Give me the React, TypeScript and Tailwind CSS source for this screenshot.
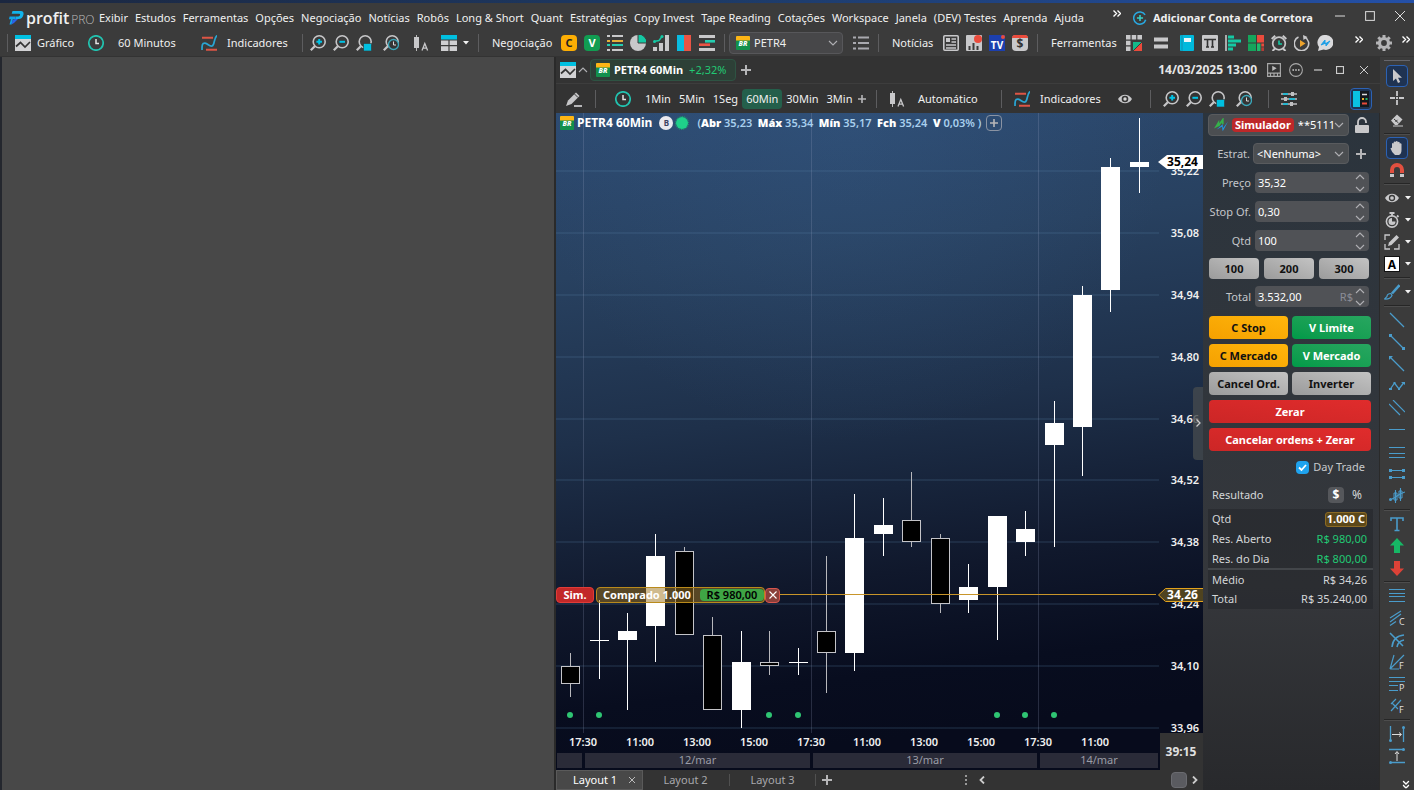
import React, { ReactNode } from "react";

const FONT = "font-['Noto_Sans','Open_Sans',sans-serif]";

/* ---------- shared pieces ---------- */

function Icon({ children, className = "size-4" }: { children: ReactNode; className?: string }) {
  return (
    <svg viewBox="0 0 16 16" className={`shrink-0 ${className}`} fill="none" aria-hidden="true">
      {children}
    </svg>
  );
}

function IconButton({ label, children, className = "" }: { label: string; children: ReactNode; className?: string }) {
  return (
    <button type="button" aria-label={label} className={`flex shrink-0 items-center justify-center ${className}`}>
      {children}
    </button>
  );
}

function Divider({ className = "" }: { className?: string }) {
  return <div className={`h-[18px] w-px shrink-0 bg-[#5d5d5f] ${className}`} />;
}

const GraphIcon = () => (
  <Icon>
    <rect width="16" height="16" fill="#d2d2d4" />
    <rect width="16" height="4" fill="#00bfe0" />
    <path d="M1 11.500l4.500-4L10 12l5-5" stroke="#333" strokeWidth="1.700" />
  </Icon>
);

const ClockIcon = () => (
  <Icon>
    <circle cx="8" cy="8" r="7.200" stroke="#22c3b0" strokeWidth="1.700" />
    <path d="M8 4v4.500h3" stroke="#e4e4e4" strokeWidth="1.500" />
  </Icon>
);

const IndicatorIcon = () => (
  <Icon>
    <path d="M1 2.800h11M5 14.800h11" stroke="#dd5545" strokeWidth="2" />
    <path d="M1 15c0-5 0-7 3-6.800C7 8.500 8 11.500 11 11c3-.8 1.500-8 5-10.500" stroke="#29a6d4" strokeWidth="1.700" />
  </Icon>
);

const Lens = () => (
  <>
    <circle cx="9.200" cy="6.800" r="6" stroke="#c6c6c8" strokeWidth="1.600" />
    <path d="M4.800 11.200L.8 15.200" stroke="#c6c6c8" strokeWidth="2.200" />
  </>
);

const ZoomIcons = () => (
  <>
    <IconButton label="Mais zoom">
      <Icon>
        <Lens />
        <path d="M9.200 4v5.600M6.400 6.800H12" stroke="#00c3e6" strokeWidth="2" />
      </Icon>
    </IconButton>
    <IconButton label="Menos zoom">
      <Icon>
        <Lens />
        <path d="M6.400 6.800H12" stroke="#00c3e6" strokeWidth="2" />
      </Icon>
    </IconButton>
    <IconButton label="Zoom na seleção">
      <Icon>
        <Lens />
        <rect x="7.500" y="8.500" width="8" height="7.500" fill="#00bfe0" stroke="#333" strokeWidth=".6" />
      </Icon>
    </IconButton>
    <IconButton label="Zoom no período" className="ml-1">
      <Icon>
        <Lens />
        <circle cx="10.500" cy="9.500" r="5" fill="#353535" stroke="#3aa8bb" strokeWidth="1.300" />
        <path d="M10.500 6.500v3.500H13" stroke="#ddd" />
      </Icon>
    </IconButton>
  </>
);

const CandleAIcon = () => (
  <Icon>
    <path d="M3.500 0v16" stroke="#bbb" />
    <rect x="1" y="2" width="5" height="11" fill="#c8c8ca" />
    <path d="M9 15.500l2.800-7 2.800 7M10 13.200h3.600" stroke="#c8c8ca" strokeWidth="1.300" />
  </Icon>
);

const Caret = () => (
  <svg viewBox="0 0 6 4" className="h-1 w-1.5 shrink-0" aria-hidden="true">
    <path d="M0 0h6L3 3.500z" fill="#f2f2f2" />
  </svg>
);

const Chevron = ({ up = false }: { up?: boolean }) => (
  <svg viewBox="0 0 10 6" className="h-1.5 w-2.5 shrink-0" fill="none" aria-hidden="true">
    <path d={up ? "M1 5l4-4 4 4" : "M1 1l4 4 4-4"} stroke="#b0b0b4" strokeWidth="1.100" />
  </svg>
);

const DoubleChevron = ({ className = "" }: { className?: string }) => (
  <svg viewBox="0 0 8 7" className={`h-[7px] w-2 shrink-0 ${className}`} fill="none" aria-hidden="true">
    <path d="M.5.5l3 3-3 3M4.500.5l3 3-3 3" stroke="#fff" strokeWidth="1.400" />
  </svg>
);

const PetroIcon = () => (
  <svg viewBox="0 0 14 14" className="size-3.5 shrink-0" aria-hidden="true">
    <rect width="14" height="14" rx="1" fill="#12904c" />
    <path d="M0 4.500V1q0-1 1-1h12q1 0 1 1v3.500z" fill="#fdb515" />
    <text x="7" y="10" textAnchor="middle" fontSize="7" fontWeight="800" fontStyle="italic" fill="#fff" className={FONT}>
      BR
    </text>
  </svg>
);

const EyeIcon = () => (
  <Icon>
    <path d="M1 8c3.500-5.800 10.500-5.800 14 0-3.500 5.800-10.500 5.800-14 0z" fill="#c9c9cb" />
    <circle cx="8" cy="8" r="3.300" fill="#353535" />
    <circle cx="8" cy="8" r="1.700" fill="#d5d5d5" />
  </Icon>
);

const PlusIcon = ({ className = "size-2.5" }: { className?: string }) => (
  <svg viewBox="0 0 10 10" className={`shrink-0 ${className}`} aria-hidden="true">
    <path d="M5 0v10M0 5h10" stroke="#b6b6b8" strokeWidth="2" />
  </svg>
);

/* ---------- application header ---------- */

const MENU = [
  "Exibir", "Estudos", "Ferramentas", "Opções", "Negociação", "Notícias", "Robôs", "Long & Short", "Quant",
  "Estratégias", "Copy Invest", "Tape Reading", "Cotações", "Workspace", "Janela", "(DEV) Testes", "Aprenda", "Ajuda",
];

function MenuBar() {
  return (
    <header className="flex h-[27px] items-center pl-[9px] pr-2 pt-[3px] text-[#f0f0f0]">
      <div className="flex w-[90px] shrink-0 items-center gap-0.5">
        <svg viewBox="0 0 15 14" className="h-3.5 w-[15px]" aria-hidden="true">
          <path d="M3.500 0H12q3 0 2.500 3.500Q13.500 8 9.500 8H6.200l.7-2.600h2.400q1.500 0 1.800-1.400.2-1.200-1-1.200H2.700z" fill="#12b4ec" />
          <path d="M.6 5.500h6.200l-.7 2.700H3.800L2.500 13.500H.5L2 8.200H0z" fill="#12a4ea" />
          <path d="M6.200 8H9L5 12l-2.500 1.500L3.500 9z" fill="#2a63e8" />
        </svg>
        <span className="flex items-baseline font-['Open_Sans',sans-serif] leading-4">
          <span className="text-base font-semibold">profit</span>
          <span className="ml-0.5 text-[12px] font-light text-[#b9b9b9]">PRO</span>
        </span>
      </div>
      <nav className="flex w-[985px] items-center justify-between whitespace-nowrap">
        {MENU.map((m) => (
          <a key={m} href="#">{m}</a>
        ))}
      </nav>
      <DoubleChevron className="mb-2.5 ml-[29px]" />
      <button type="button" className="ml-3 flex flex-1 items-center gap-1.5 whitespace-nowrap font-bold">
        <Icon className="size-3.5">
          <path d="M13.800 4.500A7 7 0 1 0 14.500 10" stroke="#29a8e0" strokeWidth="1.800" />
          <path d="M8 4.500v7M4.500 8h7" stroke="#35d0c8" strokeWidth="1.800" />
        </Icon>
        Adicionar Conta de Corretora
      </button>
      <div className="flex items-center gap-5 pb-1 pr-px">
        <IconButton label="Minimizar"><Icon className="size-2.5"><path d="M0 8h16" stroke="#ddd" strokeWidth="1.600" /></Icon></IconButton>
        <IconButton label="Maximizar"><Icon className="size-2.5"><rect x="1" y="1" width="14" height="14" stroke="#ddd" strokeWidth="1.600" /></Icon></IconButton>
        <IconButton label="Fechar"><Icon className="size-2.5"><path d="M0 0l16 16M16 0L0 16" stroke="#ddd" strokeWidth="1.600" /></Icon></IconButton>
      </div>
    </header>
  );
}

const Letter = ({ bg, fg, ch }: { bg: string; fg: string; ch: string }) => (
  <span className={`flex size-4 items-center justify-center rounded-sm text-[11px] font-bold ${bg} ${fg}`}>{ch}</span>
);

function MainToolbar() {
  return (
    <div className="flex h-[26px] items-center whitespace-nowrap pl-[7px] pr-1 text-[#f0f0f0]">
      <Divider />
      <button type="button" className="ml-[7px] flex w-[73px] shrink-0 items-center gap-1.5"><GraphIcon />Gráfico</button>
      <button type="button" className="flex w-[113px] shrink-0 items-center gap-3.5"><ClockIcon />60 Minutos</button>
      <button type="button" className="flex w-[101px] shrink-0 items-center gap-2.5"><IndicatorIcon />Indicadores</button>
      <Divider />
      <div className="ml-[7px] flex shrink-0 items-center gap-[7px]"><ZoomIcons /></div>
      <IconButton label="Tipo de gráfico" className="ml-3.5"><CandleAIcon /></IconButton>
      <button type="button" aria-label="Layouts" className="ml-3 flex shrink-0 items-center gap-1.5">
        <Icon>
          <rect width="16" height="4.500" fill="#00bfe0" />
          <path d="M0 5.500h7.400v4.600H0zM8.600 5.500H16v4.600H8.600zM0 11.300h7.400V16H0zM8.600 11.300H16V16H8.600z" fill="#cfcfd1" />
        </Icon>
        <Caret />
      </button>
      <Divider className="ml-[9px]" />
      <span className="ml-[13px] w-[69px] shrink-0">Negociação</span>
      <div className="flex shrink-0 items-center gap-[7px]">
        <IconButton label="Compra"><Letter bg="bg-[#fdae04]" fg="text-[#222]" ch="C" /></IconButton>
        <IconButton label="Venda"><Letter bg="bg-[#119d52]" fg="text-white" ch="V" /></IconButton>
        <IconButton label="Ordens">
          <Icon>
            <path d="M0 1h3M5 1h11M0 15h3M5 15h11" stroke="#c8c8ca" strokeWidth="2" />
            <path d="M0 6h3M5 6h11" stroke="#e5b03a" strokeWidth="2" />
            <path d="M0 10h3M5 10h11" stroke="#25cdb0" strokeWidth="2" />
          </Icon>
        </IconButton>
        <IconButton label="Carteira">
          <Icon>
            <circle cx="8" cy="8" r="8" fill="#c8c8ca" />
            <path d="M8-1a9 9 0 0 1 9 9H8z" fill="#14c9a4" stroke="#3b3b3b" />
          </Icon>
        </IconButton>
        <IconButton label="Performance">
          <Icon>
            <path d="M0 12h4v4H0zM6 8h4v8H6zM12 0h4v16h-4z" fill="#c8c8ca" />
            <path d="M1 6.500l5-1 3-4" stroke="#14c9a4" strokeWidth="1.400" />
            <circle cx="1.500" cy="6.500" r="1.500" fill="#14c9a4" /><circle cx="9" cy="1.500" r="1.500" fill="#14c9a4" />
          </Icon>
        </IconButton>
        <IconButton label="Book"><Icon><path d="M1 0h7v16H1z" fill="#0abbe0" /><path d="M8 0h7v16H8z" fill="#ea5445" /></Icon></IconButton>
        <IconButton label="Profundidade">
          <Icon>
            <path d="M0 1.500h16M0 14.500h16" stroke="#c8c8ca" strokeWidth="3" />
            <path d="M6 6.300h10" stroke="#25cdb0" strokeWidth="2.600" /><path d="M0 9.700h11" stroke="#ea5445" strokeWidth="2.600" />
          </Icon>
        </IconButton>
      </div>
      <Divider className="ml-[9px]" />
      <div className="relative ml-1 flex h-[22px] w-[114px] shrink-0 items-center rounded-sm border border-[#57575a] bg-[#474749] pl-1.5">
        <PetroIcon />
        <select aria-label="Ativo" className="h-full min-w-0 flex-1 appearance-none bg-transparent pl-1 text-[11px] outline-none"><option>PETR4</option></select>
        <span className="pointer-events-none pr-1"><Chevron /></span>
      </div>
      <IconButton label="Lista" className="ml-2.5">
        <Icon><path d="M0 2.500h3M5 2.500h11M0 8h3M5 8h11M0 13.500h3M5 13.500h11" stroke="#a9a9af" strokeWidth="1.800" /></Icon>
      </IconButton>
      <Divider className="ml-[9px]" />
      <span className="ml-[13px] w-[51px] shrink-0">Notícias</span>
      <div className="flex shrink-0 items-center gap-[7px]">
        <IconButton label="Jornal">
          <Icon><rect x=".8" y=".8" width="14.400" height="14.400" rx="1" stroke="#c8c8ca" strokeWidth="1.600" /><path d="M3 3h4v4H3z" fill="#c8c8ca" /><path d="M8.500 4H13M8.500 7H13M3 10h10M3 13h10" stroke="#c8c8ca" strokeWidth="1.500" /></Icon>
        </IconButton>
        <IconButton label="Calendário">
          <Icon><rect width="16" height="16" rx="1" fill="#c8c8ca" /><path d="M3.500 15v-4M7.500 15V8M11.500 15v-4" stroke="#3b3b3b" strokeWidth="2" /><circle cx="12" cy="4" r="4" fill="#ea4b3c" /></Icon>
        </IconButton>
        <IconButton label="TV" className="relative">
          <span className="flex size-4 items-end justify-center bg-[#1c3fae] text-[10px] font-bold leading-3 text-white">TV</span>
          <span className="absolute right-0 top-0 size-1 rounded-full bg-[#ea4b3c]" />
        </IconButton>
        <IconButton label="Proventos">
          <span className="flex size-4 flex-col rounded-sm bg-[#c8c8ca] text-[#333]"><span className="h-[3px] shrink-0 rounded-t-sm bg-[#ea4b3c]" /><span className="text-center text-[12px] font-bold leading-3">$</span></span>
        </IconButton>
      </div>
      <Divider className="ml-[9px]" />
      <span className="ml-[13px] w-[75px] shrink-0">Ferramentas</span>
      <div className="flex shrink-0 items-center gap-[7px]">
        <IconButton label="Grade">
          <Icon><path d="M0 0h4.500v4.500H0zM5.700 0h4.500v4.500H5.700zM11.400 0H16v4.500h-4.600zM0 5.700h4.500v4.500H0zM0 11.400h4.500V16H0z" fill="#c8c8ca" /><path d="M16 7v9H7z" fill="#ea4b3c" /><path d="M7 7h9l-9 9z" fill="#14b98a" /><path d="M16 7l-9 9" stroke="#3b3b3b" /></Icon>
        </IconButton>
        <IconButton label="Linhas" className="ml-1"><Icon><path d="M1 4.500h14M1 11.500h14" stroke="#c8c8ca" strokeWidth="4" /></Icon></IconButton>
        <IconButton label="Diário" className="ml-[3px]"><Icon><rect x="1" width="14" height="16" rx="1" fill="#00b9dc" /><path d="M3 0v16" stroke="#0d8fb0" /><rect x="5" y="3" width="7" height="4" fill="#e8f6fa" /></Icon></IconButton>
        <IconButton label="Texto"><Icon><rect width="16" height="16" rx="1" fill="#c8c8ca" /><path d="M2 4.500h12M5.500 4v8M10.500 4v8M4 12h3M9 12h3" stroke="#333" strokeWidth="1.600" /></Icon></IconButton>
        <IconButton label="Volume"><Icon><path d="M1 0v16" stroke="#c8c8ca" strokeWidth="1.600" /><path d="M3 2h6M3 6h13M3 10h8M3 14h5" stroke="#14c9a4" strokeWidth="3" /></Icon></IconButton>
        <IconButton label="Mapa de calor"><Icon><path d="M0 0h8v7.500H0zM0 8.500h8V16H0z" fill="#15a55c" /><path d="M9 0h7v7.500H9z" fill="#ea4b3c" /><path d="M9 8.500h3.500V16H9z" fill="#1fba6b" /><path d="M13.300 8.500H16v3h-2.700z" fill="#ea4b3c" /><path d="M13.300 12.300H16V16h-2.700z" fill="#b33c36" /></Icon></IconButton>
        <IconButton label="Alarme"><Icon><circle cx="8" cy="8.500" r="6.300" stroke="#c8c8ca" strokeWidth="1.700" /><path d="M.7 4l3.500-3.300M15.300 4l-3.500-3.300M4 13.500L1.500 16M12 13.500l2.500 2.500" stroke="#c8c8ca" strokeWidth="2" /><path d="M8 5.500V9h3" stroke="#14c9a4" strokeWidth="1.600" /></Icon></IconButton>
        <IconButton label="Replay"><Icon><path d="M4.500 2a7.200 7.200 0 1 0 6 0" stroke="#c8c8ca" strokeWidth="1.600" /><path d="M9 0l4.500 2L9.500 5z" fill="#c8c8ca" /><path d="M6 5l5.500 3.500L6 12z" fill="#eda32c" /></Icon></IconButton>
        <IconButton label="Chat"><Icon><path d="M8.500 0a7.500 7.500 0 1 1-2 14.600L1 16l1-4A7.500 7.500 0 0 1 8.500 0z" fill="#dadadc" /><path d="M4 10l4-5v4l5-3-4 5V8z" fill="#1d9fe6" stroke="#1d9fe6" /></Icon></IconButton>
      </div>
      <DoubleChevron className="mb-2 ml-[22px]" />
      <IconButton label="Configurações" className="ml-[13px]">
        <Icon><circle cx="8" cy="8" r="4.500" stroke="#b4b4b6" strokeWidth="3.200" /><path d="M8 0v3M8 13v3M0 8h3M13 8h3M2.300 2.300l2 2M11.700 11.700l2 2M2.300 13.700l2-2M11.700 4.300l2-2" stroke="#b4b4b6" strokeWidth="3" /></Icon>
      </IconButton>
      <DoubleChevron className="mb-2 ml-2.5" />
    </div>
  );
}

/* ---------- chart window ---------- */

function ChartTitle() {
  return (
    <div className="flex h-[27px] shrink-0 items-center border-b border-[#3d3d3d] pl-1 pr-3">
      <button type="button" aria-label="Gráfico" className="flex items-center gap-0.5"><GraphIcon /><Chevron up /></button>
      <button type="button" className="ml-0.5 flex h-[22px] w-[146px] items-center gap-1 rounded border border-[#2e5343] bg-[#2d4037] pl-[5px]">
        <PetroIcon />
        <span className="font-bold text-white">PETR4 60Min</span>
        <span className="ml-0.5 text-[#22c974]">+2,32%</span>
      </button>
      <IconButton label="Nova aba" className="ml-[5px]"><PlusIcon /></IconButton>
      <span className="ml-auto text-[12px] font-bold text-[#e6e6e6]">14/03/2025 13:00</span>
      <div className="ml-2.5 flex items-center">
        <IconButton label="Replay"><Icon className="size-3.5"><path d="M.7.7h14.600v14.600H.7zM0 11.500h16M4 12v3.500M8 12v3.500M12 12v3.500" stroke="#aaa" strokeWidth="1.300" /><path d="M6 3l5 3-5 3z" fill="#bbb" /></Icon></IconButton>
        <IconButton label="Mais" className="ml-2"><Icon className="size-3.5"><circle cx="8" cy="8" r="7.300" stroke="#aaa" strokeWidth="1.200" /><path d="M4 8h1.600M7.200 8h1.600M10.400 8H12" stroke="#ddd" strokeWidth="1.600" /></Icon></IconButton>
        <IconButton label="Minimizar" className="ml-[11px]"><Icon className="size-2"><path d="M0 8h16" stroke="#ccc" strokeWidth="2.400" /></Icon></IconButton>
        <IconButton label="Maximizar" className="ml-3.5"><Icon className="size-2"><rect x="1" y="1" width="14" height="14" stroke="#ccc" strokeWidth="2.400" /></Icon></IconButton>
        <IconButton label="Fechar" className="ml-4"><Icon className="size-2"><path d="M0 0l16 16M16 0L0 16" stroke="#ccc" strokeWidth="2" /></Icon></IconButton>
      </div>
    </div>
  );
}

const PERIODS = ["1Min", "5Min", "1Seg", "60Min", "30Min", "3Min"];

function ChartToolbar() {
  return (
    <div className="flex h-[29px] shrink-0 items-center whitespace-nowrap pl-2.5 pr-2 text-[#f0f0f0]">
      <IconButton label="Desenhar">
        <Icon><path d="M0 15l2-5.500 8-8 3.500 3.500-8 8z" fill="#c6c6c8" /><path d="M8.500 3l3.500 3.500" stroke="#353535" /><path d="M8 15h8" stroke="#c6c6c8" strokeWidth="1.800" /></Icon>
      </IconButton>
      <Divider className="ml-[13px]" />
      <IconButton label="Periodicidade" className="ml-[19px]"><ClockIcon /></IconButton>
      <div className="ml-2.5 flex w-[209px] shrink-0 items-center justify-between">
        {PERIODS.map((p) => (
          <button key={p} type="button" className={`flex h-5 items-center rounded px-1 ${p === "60Min" ? "bg-[#245f4b]" : ""}`}>{p}</button>
        ))}
      </div>
      <IconButton label="Adicionar período" className="ml-2"><PlusIcon className="size-2" /></IconButton>
      <Divider className="ml-2.5" />
      <button type="button" className="ml-3 flex w-[99px] shrink-0 items-center gap-[13px]"><CandleAIcon />Automático</button>
      <Divider className="ml-[13px]" />
      <button type="button" className="ml-3 flex w-[103px] shrink-0 items-center gap-2.5"><IndicatorIcon />Indicadores</button>
      <IconButton label="Visibilidade"><EyeIcon /></IconButton>
      <Divider className="ml-[17px]" />
      <div className="ml-3 flex items-center gap-[7px]"><ZoomIcons /></div>
      <Divider className="ml-4" />
      <IconButton label="Propriedades" className="ml-3">
        <Icon><path d="M0 3h16M0 8h16M0 13h16" stroke="#c0c0c2" strokeWidth="1.600" /><path d="M10 1h3v4h-3zM3 6h3v4H3zM9 11h3v4H9z" fill="#c0c0c2" /><path d="M2 3h5M8 8h6M2 13h5" stroke="#00bfe0" strokeWidth="1.700" /></Icon>
      </IconButton>
      <IconButton label="Boleta" className="ml-auto size-[22px] rounded border border-[#2c62b4] bg-[#1f3352]">
        <Icon><path d="M0 0h7v16H0z" fill="#0ac0e4" /><path d="M7 0h9v16H7z" fill="#15181d" /><path d="M9 3.500h5" stroke="#ddd" strokeWidth="1.500" /><path d="M9 8h2" stroke="#edae2c" strokeWidth="2" /><path d="M12.500 8h2" stroke="#21b868" strokeWidth="2" /><path d="M9 12.500h5" stroke="#ea4b3c" strokeWidth="2" /></Icon>
      </IconButton>
    </div>
  );
}

/* centre x, high, low, body top, body bottom, falling */
const CANDLES: [number, number, number, number, number, boolean][] = [
  [570, 653, 697, 666, 684, true], [599, 600, 679, 640, 641, false], [627, 613, 710, 631, 640, false],
  [655, 534, 662, 556, 626, false], [684, 547, 635, 551, 635, true], [712, 617, 710, 635, 710, true],
  [741, 631, 728, 662, 710, false], [769, 631, 675, 662, 666, true], [798, 648, 675, 662, 663, false],
  [826, 556, 693, 631, 653, true], [854, 494, 671, 538, 653, false], [883, 498, 556, 525, 534, false],
  [911, 472, 547, 520, 542, true], [940, 534, 613, 538, 604, true], [968, 564, 613, 587, 600, false],
  [997, 516, 640, 516, 587, false], [1025, 511, 556, 529, 542, false], [1054, 401, 547, 423, 445, false],
  [1082, 286, 476, 295, 427, false], [1110, 158, 312, 167, 290, false], [1139, 118, 193, 162, 167, false],
];
const PRICES: [string, number][] = [
  ["35,22", 171], ["35,08", 233], ["34,94", 295], ["34,80", 357], ["34,66", 419],
  ["34,52", 480], ["34,38", 542], ["34,24", 604], ["34,10", 666], ["33,96", 728],
];
const TIMES: [string, number][] = [
  ["17:30", 583], ["11:00", 640], ["13:00", 697], ["15:00", 754], ["17:30", 811],
  ["11:00", 867], ["13:00", 924], ["15:00", 981], ["17:30", 1038], ["11:00", 1095],
];
const DAYS: [string, number, number][] = [["", 557, 582], ["12/mar", 585, 810], ["13/mar", 813, 1037], ["14/mar", 1040, 1158]];

function CandleChart() {
  return (
    <svg viewBox="556 113 647 657" preserveAspectRatio="none" className={`block size-full ${FONT}`} role="img" aria-label="PETR4 60Min">
      <defs>
        <linearGradient id="sky" x1="0" y1="0" x2=".12" y2="1">
          <stop offset="0" stopColor="#2d4b72" />
          <stop offset=".25" stopColor="#284160" />
          <stop offset=".5" stopColor="#1e304a" />
          <stop offset=".75" stopColor="#10182c" />
          <stop offset=".9" stopColor="#080d1f" />
          <stop offset="1" stopColor="#070b1c" />
        </linearGradient>
        <radialGradient id="glow" cx=".45" cy="0" r=".5">
          <stop offset="0" stopColor="#38608f" stopOpacity=".3" />
          <stop offset="1" stopColor="#38608f" stopOpacity="0" />
        </radialGradient>
      </defs>
      <rect x="556" y="113" width="647" height="657" fill="url(#sky)" />
      <rect x="556" y="113" width="647" height="657" fill="url(#glow)" />
      {PRICES.map(([p, y]) => (
        <rect key={p} x="556" y={y - 1} width="603" height="2" fill="#5f86ad" opacity=".16" />
      ))}
      {[583, 811, 1038].map((x) => (
        <rect key={x} x={x} y="113" width="1" height="620" fill="#9aa4c4" opacity=".22" />
      ))}
      {CANDLES.map(([x, h, l, t, b, down]) => (
        <g key={x} shapeRendering="crispEdges">
          <rect x={x} y={h} width="1" height={l - h} fill={down ? "#b8b8bc" : "#fff"} />
          {down ? (
            <rect x={x - 8.5} y={t + 0.5} width="18" height={b - t - 1} fill="#000" stroke="#c4c4c8" />
          ) : (
            <rect x={x - 9} y={t} width="19" height={b - t} fill="#fff" />
          )}
        </g>
      ))}
      <rect x="780" y="594" width="376" height="1" fill="#c8952a" />
      {[570, 599, 769, 798, 997, 1025, 1054].map((x) => (
        <circle key={x} cx={x} cy="715" r="3" fill="#2fc573" />
      ))}
      <g fill="#f0f0f0" fontSize="11" fontWeight="600" textAnchor="end">
        {PRICES.map(([p, y]) => (
          <text key={p} x="1199" y={y + 4}>{p}</text>
        ))}
      </g>
      <path d="M1158 162l9-7h36v14h-36z" fill="#fff" />
      <text x="1198" y="166" textAnchor="end" fontSize="12" fontWeight="700" fill="#000">35,24</text>
      <path d="M1158.500 595l7-6.500h38v13h-38z" fill="#4f431f" stroke="#e2a21d" />
      <text x="1198" y="599" textAnchor="end" fontSize="12" fontWeight="700" fill="#fff">34,26</text>
      <g fill="#f0f0f0" fontSize="11" fontWeight="600" textAnchor="middle">
        {TIMES.map(([t, x]) => (
          <text key={x} x={x} y="746">{t}</text>
        ))}
      </g>
      {DAYS.map(([d, a, b]) => (
        <g key={a}>
          <rect x={a} y="753" width={b - a} height="15" fill="#2a2b38" />
          <text x={(a + b) / 2} y="764" textAnchor="middle" fontSize="11" fill="#9a9ca6">{d}</text>
        </g>
      ))}
      <rect x="1160" y="733" width="43" height="37" fill="#333" />
      <text x="1181" y="756" textAnchor="middle" fontSize="12" fontWeight="700" fill="#e0e0e0">39:15</text>
    </svg>
  );
}

function Quote({ name, value }: { name: string; value: string }) {
  return (
    <span><b className="text-white">{name}</b> <span className="text-[#a9d0ee]">{value}</span></span>
  );
}

function ChartArea() {
  return (
    <div className="relative min-h-0 flex-1">
      <div className="absolute inset-0"><CandleChart /></div>
      <div className="absolute left-1 top-[2px] flex h-4 items-center gap-[3px] whitespace-nowrap text-[12px] font-semibold">
        <PetroIcon />
        <span className="font-bold text-white">PETR4 60Min</span>
        <span className="ml-1 flex size-3.5 items-center justify-center rounded-full bg-[#e9e9ef] text-[8px] font-bold text-[#3d4262]">B</span>
        <span className="size-3 rounded-full bg-[#1fd08a] outline outline-dotted outline-[#1aa56c]" />
        <span className="ml-1.5 flex w-[284px] justify-between text-[11px]">
          <span><span className="text-[#a9d0ee]">(</span><Quote name="Abr" value="35,23" /></span>
          <Quote name="Máx" value="35,34" />
          <Quote name="Mín" value="35,17" />
          <Quote name="Fch" value="35,24" />
          <Quote name="V" value="0,03% )" />
        </span>
        <button type="button" aria-label="Adicionar" className="ml-0.5 flex size-4 items-center justify-center rounded border border-[#8a93a3]"><PlusIcon className="size-2" /></button>
      </div>
      <div className="absolute left-0 top-[72.200%] flex h-4 items-center whitespace-nowrap text-[11px] font-bold">
        <span className="flex h-4 w-[38px] items-center justify-center rounded-sm border border-[#e03c38] bg-[#c22828] text-white">Sim.</span>
        <span className="ml-0.5 flex h-4 w-[169px] items-center rounded-sm border border-[#b98a1c] bg-[#a0751d]/50 pl-1.5 text-white">
          <span className="flex-1">Comprado 1.000</span>
          <span className="flex h-3 w-16 items-center justify-center rounded-sm bg-[#3fa545] font-semibold text-black">R$ 980,00</span>
        </span>
        <button type="button" aria-label="Fechar posição" className="flex size-[15px] items-center justify-center rounded-sm border border-[#d8564e] bg-[#8a3f3a]"><Icon className="size-2"><path d="M1 1l14 14M15 1L1 15" stroke="#fff" strokeWidth="2.200" /></Icon></button>
      </div>
      <button type="button" aria-label="Recolher boleta" className="absolute right-0 top-[41.700%] flex h-[73px] w-2.5 items-center justify-center rounded-l-sm bg-[#454a4e]/80">
        <svg viewBox="0 0 5 8" className="h-2 w-[5px]" fill="none"><path d="M.5.5L4 4 .5 7.500" stroke="#ccc" strokeWidth="1.300" /></svg>
      </button>
    </div>
  );
}

function LayoutTabs() {
  return (
    <div className="flex h-5 shrink-0 items-center text-[#a8a8ac]">
      <button type="button" className="flex h-full w-[87px] items-center justify-between border border-[#5a5a5a] bg-[#484848] pl-4 pr-1.5 text-white">
        Layout 1
        <Icon className="size-2"><path d="M2 2l12 12M14 2L2 14" stroke="#bbb" strokeWidth="2" /></Icon>
      </button>
      <button type="button" className="w-[87px] border-r border-[#505050] pr-px leading-3">Layout 2</button>
      <button type="button" className="w-[86px] border-r border-[#505050] leading-3">Layout 3</button>
      <IconButton label="Novo layout" className="ml-1.5"><PlusIcon /></IconButton>
      <div className="ml-auto flex items-center pr-[5px]">
        <svg viewBox="0 0 2 10" className="h-2.5 w-0.5"><path d="M1 0v2M1 4v2M1 8v2" stroke="#999" strokeWidth="2" /></svg>
        <IconButton label="Anterior" className="ml-3"><svg viewBox="0 0 6 8" className="h-2 w-1.5" fill="none"><path d="M5 .5L1.500 4 5 7.500" stroke="#ccc" strokeWidth="1.800" /></svg></IconButton>
        <div className="ml-[186px] size-4 rounded-sm border border-[#6a6b70] bg-[#5a5b60]" />
        <IconButton label="Próximo" className="ml-[5px]"><svg viewBox="0 0 6 8" className="h-2 w-1.5" fill="none"><path d="M1 .5L4.500 4 1 7.500" stroke="#ccc" strokeWidth="1.800" /></svg></IconButton>
      </div>
    </div>
  );
}

/* ---------- order panel ---------- */

function Spin() {
  return (
    <span className="flex flex-col items-center gap-1.5">
      <button type="button" aria-label="Aumentar" className="flex"><Chevron up /></button>
      <button type="button" aria-label="Diminuir" className="flex"><Chevron /></button>
    </span>
  );
}

function Field({ id, label, value, suffix }: { id: string; label: string; value: string; suffix?: string }) {
  return (
    <div className="flex h-[21px] items-center">
      <label htmlFor={id} className="w-[47px] shrink-0 whitespace-nowrap text-right text-[#c4c6ca]">{label}</label>
      <div className="ml-1 flex h-full min-w-0 flex-1 items-center rounded-sm bg-[#505256] pl-[3px] pr-1">
        <input id={id} defaultValue={value} className="min-w-0 flex-1 bg-transparent text-white outline-none" />
        {suffix && <span className="mr-0.5 text-[#8b8d96]">{suffix}</span>}
        <Spin />
      </div>
    </div>
  );
}

const GREY_BTN = "rounded-sm bg-linear-to-tr from-[#9b9b9b] to-[#c3c3c3] font-bold text-[#111]";
const YELLOW_BTN = "h-[23px] rounded-sm bg-linear-to-tr from-[#f5a000] to-[#ffb60c] font-bold text-[#111]";
const GREEN_BTN = "h-[23px] rounded-sm bg-linear-to-tr from-[#009a48] to-[#27a660] font-bold text-white";
const RED_BTN = "h-[23px] rounded-sm bg-linear-to-tr from-[#cc2626] to-[#e02c2c] font-bold text-white";

function OrderPanel() {
  return (
    <aside className="flex w-[177px] shrink-0 flex-col border-r border-[#2a2a2a] bg-linear-to-b from-[#2b343d] via-[#35373b] via-70% to-[#28292c] pl-[5px] pt-px">
      <div className="flex h-[22px] items-center">
        <div className="flex h-full w-[141px] items-center rounded-sm border border-[#595b5e] bg-[#4b4e51] pl-[5px] pr-1">
          <Icon className="size-3.5"><path d="M0 12l6-10v7z" fill="#35b34a" /><path d="M5 9l5-7v5" stroke="#35b34a" strokeWidth="2" /><path d="M3 13l7-6v5l6-8-6 11-1-5z" fill="#1f98e8" /></Icon>
          <span className="ml-1 rounded bg-[#bd2829] px-[3px] font-bold leading-[14px] text-white">Simulador</span>
          <select aria-label="Conta" className="ml-1 min-w-0 flex-1 appearance-none bg-transparent text-[11px] text-white outline-none"><option>**5111</option></select>
          <Chevron />
        </div>
        <IconButton label="Bloquear" className="ml-1.5"><svg viewBox="0 0 14 16" className="h-4 w-3.5" fill="none"><path d="M3 8V5a4 4 0 0 1 8 0v1" stroke="#c8c8ca" strokeWidth="1.800" /><rect y="8" width="14" height="8" rx="1" fill="#c8c8ca" /></svg></IconButton>
      </div>
      <div className="mt-[7px] flex h-[21px] items-center">
        <label htmlFor="estrat" className="w-[42px] shrink-0 text-right text-[#c4c6ca]">Estrat.</label>
        <div className="ml-[3px] flex h-full w-24 items-center rounded-sm border border-[#595b5e] bg-[#4b4e51] pl-[3px] pr-1">
          <select id="estrat" className="min-w-0 flex-1 appearance-none bg-transparent text-[11px] text-white outline-none"><option>&lt;Nenhuma&gt;</option></select>
          <Chevron />
        </div>
        <IconButton label="Nova estratégia" className="ml-[7px]"><PlusIcon /></IconButton>
      </div>
      <div className="mt-2 flex flex-col gap-2 pr-2.5">
        <div className="-ml-1 flex flex-col gap-2">
          <Field id="preco" label="Preço" value="35,32" />
          <Field id="stop" label="Stop Of." value="0,30" />
          <Field id="qtd" label="Qtd" value="100" />
        </div>
        <div className="-mt-px grid grid-cols-3 gap-[5px] pl-px">
          {["100", "200", "300"].map((n) => (
            <button key={n} type="button" className={`h-[21px] ${GREY_BTN}`}>{n}</button>
          ))}
        </div>
        <div className="-ml-1 -mt-px"><Field id="total" label="Total" value="3.532,00" suffix="R$" /></div>
      </div>
      <div className="mt-[9px] grid grid-cols-2 gap-x-1 gap-y-[5px] pl-px pr-2">
        <button type="button" className={YELLOW_BTN}>C Stop</button>
        <button type="button" className={GREEN_BTN}>V Limite</button>
        <button type="button" className={YELLOW_BTN}>C Mercado</button>
        <button type="button" className={GREEN_BTN}>V Mercado</button>
        <button type="button" className={`h-[23px] ${GREY_BTN}`}>Cancel Ord.</button>
        <button type="button" className={`h-[23px] ${GREY_BTN}`}>Inverter</button>
        <button type="button" className={`col-span-2 ${RED_BTN}`}>Zerar</button>
        <button type="button" className={`col-span-2 ${RED_BTN}`}>Cancelar ordens + Zerar</button>
      </div>
      <label className="mt-2 flex h-4 items-center justify-end gap-1 pr-3.5 text-[#c8cacc]">
        <span className="relative flex size-[13px]">
          <input type="checkbox" defaultChecked className="size-[13px] appearance-none rounded-sm bg-[#1fa3ee]" />
          <svg viewBox="0 0 13 13" className="pointer-events-none absolute inset-0 size-[13px]" fill="none"><path d="M3 6.500l2.500 2.500L10 4" stroke="#fff" strokeWidth="1.800" /></svg>
        </span>
        Day Trade
      </label>
      <div className="mt-3 flex h-4 items-center pl-1 pr-[17px] text-[#d4d6d8]">
        <span className="flex-1">Resultado</span>
        <button type="button" className="flex size-4 items-center justify-center rounded-sm bg-[#55575b] text-[12px] font-bold text-white">$</button>
        <button type="button" className="ml-2 text-[12px]">%</button>
      </div>
      <table className="mr-1.5 mt-1.5 border-collapse text-[#d4d6d8]">
        <tbody className="bg-[#24262b]/60">
          <Row name="Qtd"><span className="inline-flex h-[15px] items-center rounded-[3px] border border-[#8c6b24] bg-[#5c4819] px-px font-bold text-white">1.000 C</span></Row>
          <Row name="Res. Aberto" tone="text-[#22c974]">R$ 980,00</Row>
          <Row name="Res. do Dia" tone="text-[#22c974]">R$ 800,00</Row>
        </tbody>
        <tbody className="border-t-2 border-[#43464a] bg-[#24262b]/60">
          <Row name="Médio">R$ 34,26</Row>
          <Row name="Total">R$ 35.240,00</Row>
        </tbody>
      </table>
    </aside>
  );
}

function Row({ name, tone = "", children }: { name: string; tone?: string; children: ReactNode }) {
  return (
    <tr className="h-5">
      <th scope="row" className="p-0 pl-1 text-left font-normal">{name}</th>
      <td className={`p-0 pr-1.5 text-right ${tone}`}>{children}</td>
    </tr>
  );
}

/* ---------- drawing tools ---------- */

type Tool = { name: string; art: ReactNode; caret?: boolean; active?: boolean } | "sep";
const B = "#4a9ccb";
const G = "#c9c9cb";
const mark = (ch: string) => (
  <text x="10" y="15" fontSize="9" fill="#ddd" className={FONT}>{ch}</text>
);

const TOOLS: Tool[] = [
  { name: "Cursor", active: true, art: <path d="M4 1v12l3-2.500 2 4.500 2.200-1L9 9.800h4z" fill={G} /> },
  { name: "Cruz", art: <path d="M8 1v5M8 10v5M1 8h5M10 8h5M7 8h2" stroke={G} strokeWidth="1.800" /> },
  { name: "Borracha", art: <><path d="M2 8.500l6-6 5.500 5-5 5.500H6z" fill={G} /><path d="M5 7l4.500 4M6.500 9.800l2-2" stroke="#3a3a3a" /><path d="M4 14h10" stroke={G} /></> },
  "sep",
  { name: "Mover", active: true, art: <path d="M3 3.500q1-1 1.700 0v-1.500q1-1.200 2 0v-.5q1-1.200 2 0v.7q1-1 2 .3v1q1.300-.8 1.800.5V10q0 4-2.500 5H6Q2.500 12 1.500 8.500 2 7.500 3 8z" fill={G} /> },
  { name: "Magneto", art: <><path d="M3 11V8a5 5 0 0 1 10 0v3" stroke="#e2503f" strokeWidth="4" /><path d="M1 13.500h4M11 13.500h4" stroke={G} strokeWidth="3" /></> },
  "sep",
  { name: "Visibilidade", caret: true, art: <><path d="M1 8c3.500-5.800 10.500-5.800 14 0-3.500 5.800-10.500 5.800-14 0z" fill={G} /><circle cx="8" cy="8" r="2.500" stroke="#3a3a3a" strokeWidth="1.300" /></> },
  { name: "Tempo", caret: true, art: <><circle cx="8" cy="9.500" r="5.600" stroke={G} strokeWidth="1.600" /><path d="M8 6v3.500h3.500A3.500 3.500 0 1 1 8 6z" fill={G} /><path d="M5.500 1h5M8 1v3M13 3.500l1.500 1.500" stroke={G} strokeWidth="1.800" /></> },
  { name: "Editar", caret: true, art: <><path d="M1 6V1h5M1 10v5h5M10 15h5v-5" stroke={G} strokeWidth="1.300" /><path d="M4 12l1-3.500L12.500 1l2.500 2.500L7.500 11z" fill={G} /></> },
  { name: "Texto fixo", caret: true, art: <><rect x="0" y="0" width="16" height="16" fill="#111" /><rect x="1" y="1" width="14" height="14" fill="#fff" /><text x="8" y="12.500" textAnchor="middle" fontSize="12" fontWeight="700" fill="#000" className={FONT}>A</text></> },
  "sep",
  { name: "Pincel", caret: true, art: <><path d="M15.500 1L8 9.500" stroke={B} strokeWidth="2.600" /><path d="M7 9.500q-4 0-4 3L.5 15q5.500.5 7.500-3.500z" stroke={B} strokeWidth="1.200" /></> },
  "sep",
  { name: "Linha", art: <path d="M1 1l14 14" stroke={B} strokeWidth="1.200" /> },
  { name: "Segmento", art: <><path d="M1.500 1.500l13 13" stroke={B} strokeWidth="1.200" /><path d="M0 0h3v3H0zM13 13h3v3h-3z" fill={B} /></> },
  { name: "Raio", art: <><path d="M1 1l14 14" stroke={B} strokeWidth="1.200" /><path d="M0 0h4L0 4z" fill={B} /></> },
  { name: "Zigue-zague", art: <><path d="M1 11.500L5.500 5l4.500 6 4.500-6" stroke={B} strokeWidth="1.300" /><path d="M0 10h3v2H0zM4.500 4h2v2h-2zM9 10h2v2H9zM12 4h4v3z" fill={B} /></> },
  { name: "Paralelas", art: <path d="M0 4l11 11M4 0l12 12" stroke={B} strokeWidth="1.200" /> },
  { name: "Horizontal", art: <path d="M0 7.500h16" stroke={B} /> },
  { name: "Níveis", art: <path d="M0 3.500h16M0 9.500h16M0 13.500h16" stroke={B} /> },
  { name: "Canal", art: <><path d="M0 4.500h16M0 11.500h16" stroke={B} /><path d="M0 3h3v3H0zM13 3h3v3h-3zM0 10h3v3H0zM13 10h3v3h-3z" fill={B} /></> },
  { name: "Padrão", art: <><path d="M1 12l4-2 6-4 5-2M6.500 2v13M11.500 0v13" stroke={B} strokeWidth="1.100" /><path d="M5 5h3v7H5zM10 3h3v7h-3z" stroke={B} /><circle cx="1.500" cy="11.500" r="1.500" fill={B} /></> },
  "sep",
  { name: "Texto", art: <path d="M2 5V2h12v3M8 2v12.500M5.500 14.500h5" stroke={B} strokeWidth="1.600" /> },
  { name: "Compra", art: <path d="M8 0l7 7.500h-4V15H5V7.500H1z" fill="#16b765" /> },
  { name: "Venda", art: <path d="M8 16l7-7.500h-4V1H5v7.500H1z" fill="#dc4237" /> },
  "sep",
  { name: "Fibonacci", art: <path d="M0 1.500h16M0 5.500h16M0 8.500h16M0 13.500h16" stroke={B} /> },
  { name: "Canal C", art: <><path d="M1 8l11-7M1 12l11-8M1 15.500l6-4" stroke={B} strokeWidth="1.200" />{mark("C")}</> },
  { name: "Arcos", art: <><path d="M1 1l13 13M3 15Q4 4 15 3M8 15q1-6 7-7" stroke={B} strokeWidth="1.600" /></> },
  { name: "Leque", art: <><path d="M1 15h9M1 15L5 1M1 15L15 1" stroke={B} strokeWidth="1.200" />{mark("F")}</> },
  { name: "Retração", art: <><path d="M0 1.500h16M0 5.500h16M0 9.500h9M0 14.500h9" stroke={B} />{mark("P")}</> },
  { name: "Expansão", art: <><path d="M2 13L12 2M3 5l6 6M7 1L2 6" stroke={B} strokeWidth="1.200" />{mark("F")}</> },
  "sep",
  { name: "Régua horizontal", art: <><path d="M1.500 0v14M14.500 1v15" stroke={B} strokeWidth="1.300" /><path d="M3 8.500h9M10 6.500l2.500 2L10 10.500" stroke="#ddd" /><circle cx="1.500" cy="14.500" r="1.500" fill={B} /><circle cx="14.500" cy="1.500" r="1.500" fill={B} /></> },
  { name: "Régua vertical", art: <><path d="M0 1.500h15M1 14.500h15" stroke={B} strokeWidth="1.300" /><path d="M8 13V4M6 6l2-2.500L10 6" stroke="#ddd" /><circle cx="14.500" cy="1.500" r="1.500" fill={B} /><circle cx="1.500" cy="14.500" r="1.500" fill={B} /></> },
];

function ToolStrip() {
  return (
    <div className="flex w-[34px] shrink-0 flex-col bg-[#3b3b3b] pt-[3px]">
      <div className="mx-1 mb-1 h-px bg-[#66666c]" />
      {TOOLS.map((t, i) =>
        t === "sep" ? (
          <div key={i} className="flex h-1.5 items-center px-1"><div className="h-0.5 w-full border-b border-[#4d4d4d] bg-[#262626]" /></div>
        ) : (
          <button key={i} type="button" aria-label={t.name} className={`flex h-[22px] items-center ${t.active ? "mx-1.5 justify-center rounded border border-[#2c62b4] bg-[#1f3352]" : t.caret ? "justify-between pl-1 pr-[3px]" : "justify-center"}`}>
            <Icon>{t.art}</Icon>
            {t.caret && <Caret />}
          </button>
        ),
      )}
      <div className="mb-0.5 ml-auto mr-1 mt-auto rotate-90"><DoubleChevron /></div>
    </div>
  );
}

/* ---------- page ---------- */

export default function App() {
  return (
    <div className={`flex h-screen flex-col overflow-hidden bg-[#3b3b3b] text-[11px] leading-4 ${FONT}`}>
      <div className="h-[3px] shrink-0 bg-linear-to-r from-[#1b2740] via-[#1d3a66] to-[#2450a8]" />
      <MenuBar />
      <MainToolbar />
      <div className="flex min-h-0 flex-1 border-t border-[#333333]">
        <main className="min-w-0 flex-1 border-l-2 border-[#24272e] bg-[#484848]" />
        <section className="flex w-[826px] shrink-0 flex-col border-l-2 border-[#2a2a2a] bg-[#333333]">
          <ChartTitle />
          <ChartToolbar />
          <div className="flex min-h-0 flex-1">
            <div className="flex min-w-0 flex-1 flex-col"><ChartArea /><LayoutTabs /></div>
            <OrderPanel />
          </div>
        </section>
        <ToolStrip />
      </div>
    </div>
  );
}
